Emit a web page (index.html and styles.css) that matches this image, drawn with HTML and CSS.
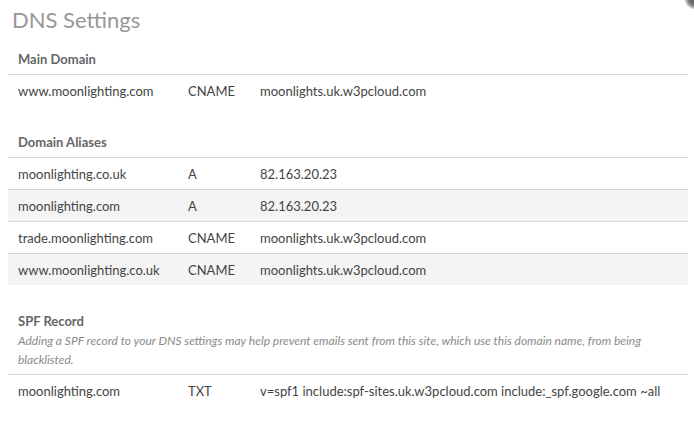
FILE: index.html
```html
<!DOCTYPE html>
<html>
<head>
<meta charset="utf-8">
<link rel="stylesheet" href="styles.css">
</head>
<body>
<div class="corner"></div>
<div class="panel">
  <h1 class="title">DNS Settings</h1>

  <section class="group">
    <div class="group-head">
      <h2 class="group-title">Main Domain</h2>
    </div>
    <div class="rows">
      <div class="row"><span class="c1">www.moonlighting.com</span><span class="c2">CNAME</span><span class="c3">moonlights.uk.w3pcloud.com</span></div>
    </div>
  </section>

  <section class="group">
    <div class="group-head">
      <h2 class="group-title">Domain Aliases</h2>
    </div>
    <div class="rows">
      <div class="row"><span class="c1">moonlighting.co.uk</span><span class="c2">A</span><span class="c3">82.163.20.23</span></div>
      <div class="row alt"><span class="c1">moonlighting.com</span><span class="c2">A</span><span class="c3">82.163.20.23</span></div>
      <div class="row"><span class="c1">trade.moonlighting.com</span><span class="c2">CNAME</span><span class="c3">moonlights.uk.w3pcloud.com</span></div>
      <div class="row alt"><span class="c1">www.moonlighting.co.uk</span><span class="c2">CNAME</span><span class="c3">moonlights.uk.w3pcloud.com</span></div>
    </div>
  </section>

  <section class="group">
    <div class="group-head">
      <h2 class="group-title">SPF Record</h2>
      <p class="group-desc">Adding a SPF record to your DNS settings may help prevent emails sent from this site, which use this domain name, from being blacklisted.</p>
    </div>
    <div class="rows">
      <div class="row"><span class="c1">moonlighting.com</span><span class="c2">TXT</span><span class="c3">v=spf1 include:spf-sites.uk.w3pcloud.com include:_spf.google.com ~all</span></div>
    </div>
  </section>
</div>
</body>
</html>
```

FILE: styles.css
```css
html, body {
  margin: 0;
  padding: 0;
  background: #ffffff;
}

body {
  font-family: Lato, "Open Sans", "Liberation Sans", sans-serif;
  color: #444444;
  position: relative;
  width: 694px;
  height: 442px;
  overflow: hidden;
}

.corner {
  position: absolute;
  top: -14px;
  right: -14px;
  width: 24px;
  height: 24px;
  border-radius: 50%;
  background: radial-gradient(circle at center, #555 0, #777 45%, rgba(140,140,140,0.6) 60%, rgba(255,255,255,0) 72%);
}

.panel {
  padding: 4px 6px 0 8px;
  display: flex;
  flex-direction: column;
}

.title {
  margin: 0 0 0 4px;
  font-size: 22px;
  font-weight: 400;
  line-height: 32px;
  color: #979797;
  height: 32px;
}

.group {
  display: flex;
  flex-direction: column;
  margin-top: 26px;
}

.group:first-of-type {
  margin-top: 13px;
}

.group-head {
  padding: 0 10px 5px;
  border-bottom: 1px solid #d6d6d6;
}

.group-title {
  margin: 0;
  font-size: 13px;
  font-weight: 700;
  line-height: 20px;
  color: #666666;
}

.group-desc {
  margin: 0;
  font-size: 12px;
  font-style: italic;
  line-height: 19px;
  color: #8a8a8a;
}

.rows {
  display: flex;
  flex-direction: column;
}

.row {
  display: flex;
  align-items: center;
  height: 31px;
  font-size: 13px;
  color: #444444;
  white-space: nowrap;
}

.row + .row {
  border-top: 1px solid #d6d6d6;
}

.row.alt {
  background: #f4f4f4;
}

.c1 {
  width: 170px;
  padding-left: 10px;
  box-sizing: border-box;
}

.c2 {
  width: 82px;
  padding-left: 10px;
  box-sizing: border-box;
}

.c3 {
  padding-left: 0;
}
```
